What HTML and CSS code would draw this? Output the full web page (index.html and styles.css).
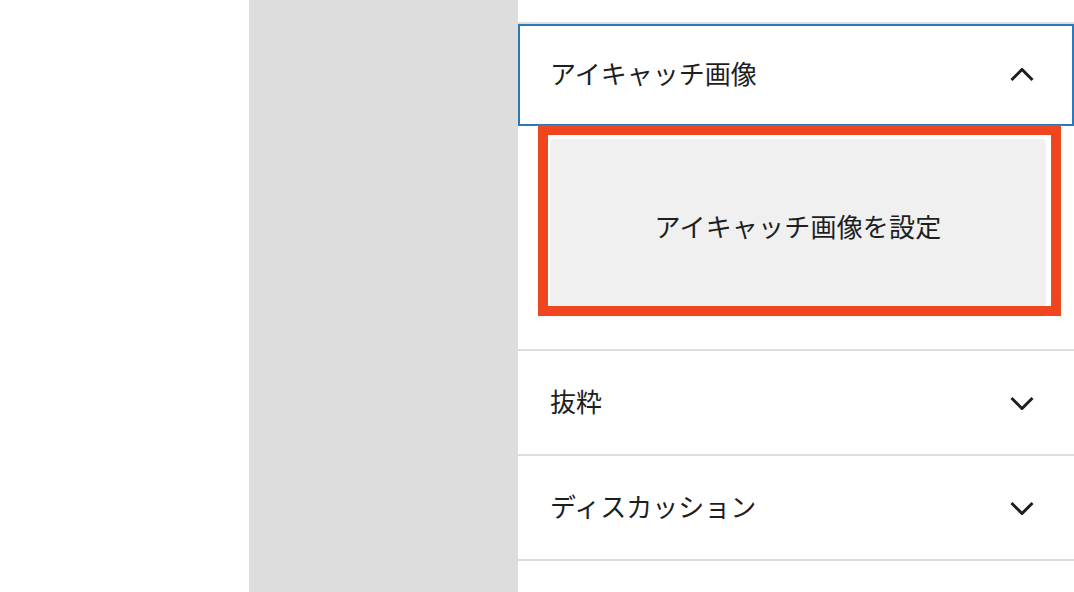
FILE: index.html
```html
<!DOCTYPE html>
<html lang="ja">
<head>
<meta charset="utf-8">
<title>アイキャッチ画像</title>
<link rel="stylesheet" href="styles.css">
</head>
<body>
<div class="screen">
  <div class="blank"></div>
  <div class="canvas"></div>
  <aside class="sidebar">
    <div class="spacer"></div>
    <section class="panel is-open">
      <div class="panel-header is-focused">
        <span class="panel-title">アイキャッチ画像</span>
        <svg class="chev" width="24" height="14" viewBox="0 0 24 14"><polyline points="1.5,12 12,1.5 22.5,12" fill="none" stroke="#1e1e1e" stroke-width="3"/></svg>
      </div>
      <div class="panel-body">
        <div class="featured">
          <div class="featured-btn">アイキャッチ画像を設定</div>
          <div class="highlight"></div>
        </div>
      </div>
    </section>
    <section class="panel">
      <div class="panel-header">
        <span class="panel-title">抜粋</span>
        <svg class="chev" width="24" height="14" viewBox="0 0 24 14"><polyline points="1.5,2 12,12.5 22.5,2" fill="none" stroke="#1e1e1e" stroke-width="3"/></svg>
      </div>
    </section>
    <section class="panel">
      <div class="panel-header">
        <span class="panel-title">ディスカッション</span>
        <svg class="chev" width="24" height="14" viewBox="0 0 24 14"><polyline points="1.5,2 12,12.5 22.5,2" fill="none" stroke="#1e1e1e" stroke-width="3"/></svg>
      </div>
    </section>
    <section class="panel last"></section>
  </aside>
</div>
</body>
</html>
```

FILE: styles.css
```css
html, body {
  margin: 0;
  padding: 0;
  background: #fff;
}
body {
  font-family: "Noto Sans CJK JP", "Noto Sans", sans-serif;
  color: #1e1e1e;
}
.screen {
  display: flex;
  width: 1074px;
  height: 592px;
  overflow: hidden;
}
.blank {
  width: 249px;
  flex: none;
  background: #fff;
}
.canvas {
  width: 269px;
  flex: none;
  background: #dddddd;
}
.sidebar {
  flex: 1;
  display: flex;
  flex-direction: column;
  background: #fff;
}
.spacer {
  height: 22px;
  flex: none;
}
.panel {
  border-top: 2px solid #dddddd;
  flex: none;
}
.panel.last {
  flex: 1;
}
.panel-header {
  height: 103px;
  box-sizing: border-box;
  display: flex;
  align-items: center;
  justify-content: space-between;
  padding: 0 40px 0 32px;
}
.panel-header.is-focused {
  height: 102px;
  box-shadow: inset 0 0 0 2px #2a79bd;
}
.panel-title {
  font-size: 26px;
  line-height: 1;
  position: relative;
  top: -2px;
}
.chev {
  display: block;
  flex: none;
}
.panel-body {
  padding: 13px 28px 32px 32px;
}
.featured {
  position: relative;
}
.featured-btn {
  height: 178px;
  box-sizing: border-box;
  padding-bottom: 5px;
  background: #f0f0f0;
  border-radius: 4px;
  display: flex;
  align-items: center;
  justify-content: center;
  font-size: 26px;
  line-height: 1;
  letter-spacing: 0.2px;
}
.highlight {
  position: absolute;
  left: -12px;
  top: -14px;
  width: 523px;
  height: 191px;
  box-sizing: border-box;
  border: 10px solid #ef461f;
}
```
